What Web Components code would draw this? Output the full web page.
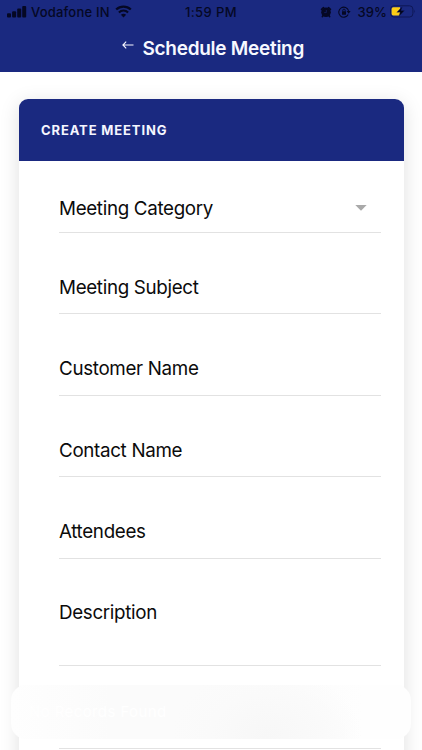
<!DOCTYPE html>
<html lang="en">
<head>
<meta charset="utf-8">
<title>Schedule Meeting</title>
<style>
html,body{margin:0;height:750px;overflow:hidden;background:#fff}
body{font-family:Inter,"Liberation Sans",sans-serif;color:#0b0b0b}
</style>
</head>
<body>
<meeting-app></meeting-app>
<script>
const define=(name,html)=>customElements.define(name,class extends HTMLElement{
  constructor(){
    super();
    const t=document.createElement('template');
    t.innerHTML=html;
    this.attachShadow({mode:'open'}).append(t.content.cloneNode(true));
  }
});

define('status-bar',`
<style>
:host{display:grid;grid-template-columns:1fr auto 1fr;align-items:center;height:23px;padding:0 7px;color:#050824;font-size:13px;font-weight:500;line-height:16px;white-space:nowrap}
div{display:flex;align-items:center}
svg{display:block;flex:none}
.carrier{margin:0 5px 0 4px;letter-spacing:.2px}
.time{letter-spacing:.4px}
.right{justify-content:flex-end;margin-right:-1px}
.pct{margin:0 3px 0 6px;letter-spacing:.1px}
</style>
<div>
  <svg width="20" height="12" viewBox="0 0 20 12" fill="currentColor"><rect x="0" y="7.3" width="4" height="4.2" rx="1"/><rect x="5.1" y="5.2" width="4" height="6.3" rx="1"/><rect x="10.2" y="2.6" width="4" height="8.9" rx="1"/><rect x="15.2" y="0" width="4" height="11.5" rx="1"/></svg>
  <span class="carrier">Vodafone IN</span>
  <svg width="17" height="13" viewBox="0 0 17 13" fill="none" stroke="currentColor"><path d="M1.2 4.5a10.5 10.5 0 0 1 14.6 0" stroke-width="2.3"/><path d="M3.9 7.4a6.5 6.5 0 0 1 9.2 0" stroke-width="2.1"/><path d="M8.5 12.5L5.9 9.8a3.9 3.9 0 0 1 5.2 0z" fill="currentColor" stroke="none"/></svg>
</div>
<span class="time">1:59 PM</span>
<div class="right">
  <svg width="12" height="12" viewBox="0 0 12 12"><circle cx="6" cy="6.3" r="4.8" fill="currentColor"/><path d="M1.6 3.4L3.5 1.7M8.5 1.7l1.9 1.7M2.9 9.8l-.5.8M9.1 9.8l.5.8" stroke="currentColor" stroke-width="1.7" stroke-linecap="round"/><path d="M6.3 4v2.6H4.2" stroke="#1a2980" fill="none" stroke-width=".6"/></svg>
  <svg style="margin-left:6px" width="13" height="12" viewBox="0 0 13 12" fill="none" stroke="currentColor"><path d="M10.2 8.5a5 5 0 1 1 .4-3.6" stroke-width="1.1"/><path d="M8.6 5.1h4l-1.9 2.6z" fill="currentColor" stroke="none"/><rect x="4" y="5.3" width="4" height="3.4" rx=".5" fill="currentColor" stroke="none"/><path d="M4.8 5.5V4.3a1.2 1.2 0 0 1 2.4 0v1.2" stroke-width=".9"/></svg>
  <span class="pct">39%</span>
  <svg width="26" height="13" viewBox="0 0 26 13"><rect x=".6" y=".8" width="22.3" height="11.2" rx="3.3" fill="none" stroke="#0e1756" stroke-width="1"/><path d="M24.3 4.6q1.5 1.8 0 3.6z" fill="#0e1756"/><path d="M3.3 2.3H10V10.5H3.3a1.7 1.7 0 0 1-1.7-1.7V4a1.7 1.7 0 0 1 1.7-1.7z" fill="#fccd16"/><path d="M12.6 1.2L6.8 7.3h3.4L8.6 11.8l6-6.2h-3.5z" fill="#03061c" stroke="#1a2980" stroke-width=".3"/></svg>
</div>`);

define('nav-bar',`
<style>
:host{display:flex;justify-content:center;align-items:center;height:51px;padding-left:4px;color:#f7f8ff}
svg{display:block;margin:-7px 8.5px 0 0}
h1{margin:0;font-size:19px;line-height:24px;font-weight:600;letter-spacing:-.27px;white-space:nowrap}
</style>
<svg width="12" height="10" viewBox="0 0 12 10" fill="none" stroke="currentColor" stroke-width="1.1"><path d="M11.5 5H1M4.2 1.7L.9 5l3.3 3.3"/></svg>
<h1><slot></slot></h1>`);

define('form-field',`
<style>
:host{display:flex;box-sizing:border-box;height:81.5px;align-items:flex-end;justify-content:space-between;padding:0 14px 13.8px 0;border-bottom:1.4px solid #e2e2e2;font-size:18.8px;line-height:24px;white-space:nowrap;letter-spacing:-.33px}
:host([first]){height:72.4px;padding-bottom:11.4px}
:host([tall]){height:106.7px;padding-bottom:39.3px}
:host([last]){height:83px}
svg{display:none;margin-bottom:10px}
:host([select]) svg{display:block}
</style>
<span><slot></slot></span>
<svg width="12" height="6" viewBox="0 0 12 6"><path d="M.3 0h11.4L6 5.8z" fill="#a9a9a9"/></svg>`);

define('form-card',`
<style>
:host{display:block;margin:26.5px 18px 0 18.5px;height:720px;border-radius:9px;background:#fff;box-shadow:0 4px 20px rgba(0,0,0,.13)}
header{display:flex;align-items:center;box-sizing:border-box;height:62px;padding:0 22.5px;border-radius:9px 9px 0 0;background:#1a2980;color:#f5f6ff;font-size:13px;font-weight:700;letter-spacing:.87px}
main{padding:0 23px 0 40.5px}
</style>
<header><slot name="title"></slot></header>
<main><slot></slot></main>`);

define('toast-message',`
<style>
:host{position:absolute;left:11px;top:685px;box-sizing:border-box;width:400px;height:54px;display:flex;align-items:center;padding:0 18px;border-radius:15px;background:radial-gradient(ellipse 95px 70px at 256px 52px,#f7f7f7,#fafafa 60%,rgba(252,252,252,0)),linear-gradient(90deg,#fefefe,#fbfbfb 25%,#fbfbfb 65%,#fefefe 88%);color:#fff;font-size:15px;line-height:20px;letter-spacing:.4px;white-space:nowrap}
</style><slot></slot>`);

define('meeting-app',`
<style>
:host{display:block;position:relative;width:422px;height:750px;overflow:hidden;background:#fff}
.top{background:#1a2980;height:72px}
</style>
<div class="top"><status-bar></status-bar><nav-bar>Schedule Meeting</nav-bar></div>
<form-card><span slot="title">CREATE MEETING</span>
<form-field first select>Meeting Category</form-field>
<form-field>Meeting Subject</form-field>
<form-field>Customer Name</form-field>
<form-field>Contact Name</form-field>
<form-field>Attendees</form-field>
<form-field tall>Description</form-field>
<form-field last></form-field>
</form-card>
<toast-message>No Records Found</toast-message>`);
</script>
</body>
</html>
